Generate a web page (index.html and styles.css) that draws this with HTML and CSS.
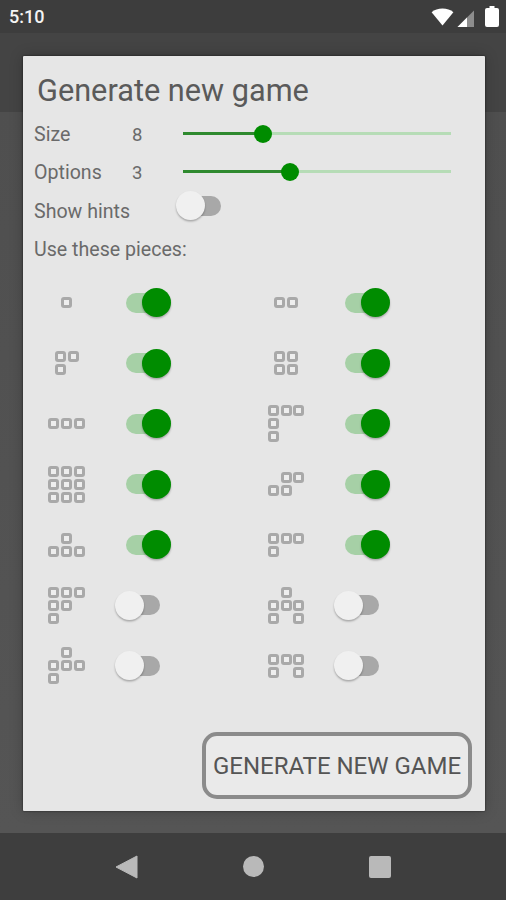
FILE: index.html
```html
<!DOCTYPE html>
<html lang="en">
<head>
<meta charset="utf-8">
<title>Generate new game</title>
<link rel="stylesheet" href="styles.css">
</head>
<body>
<div class="screen">
  <header class="status">
    <span class="time">5:10</span>
    <div class="status-icons">
      <svg class="ic-wifi" width="23" height="18" viewBox="0 0 24 19"><path d="M0.5 4.5C3.5 1.800 7.500 0.500 12 0.500s8.500 1.300 11.500 4L12 18.500z" fill="#fff"/></svg>
      <svg class="ic-signal" width="18" height="18" viewBox="0 0 18 18"><path d="M17 0.500V17H0.500z" fill="#8d8d8d"/><path d="M10 7.500V17H0.500z" fill="#fff"/></svg>
      <svg class="ic-battery" width="14" height="21" viewBox="0 0 14 21"><path d="M4.500 0h5v2H12a2 2 0 0 1 2 2v15a2 2 0 0 1-2 2H2a2 2 0 0 1-2-2V4a2 2 0 0 1 2-2h2.500z" fill="#fff"/></svg>
    </div>
  </header>
  <div class="appbar"></div>
  <main class="content"></main>
  <nav class="navbar">
    <svg width="23" height="24" viewBox="0 0 23 24"><path d="M22 1V23L1 12z" fill="#b9b9b9" stroke="#b9b9b9" stroke-linejoin="round"/></svg>
    <span class="nav-home"></span>
    <span class="nav-recent"></span>
  </nav>

  <section class="dialog">
    <h1 class="title">Generate new game</h1>
    <div class="row row-slider">
      <span class="label">Size</span><span class="value">8</span>
      <div class="slider"><div class="slider-on" style="width:29.8%"></div><span class="slider-thumb" style="left:29.8%"></span></div>
    </div>
    <div class="row row-slider">
      <span class="label">Options</span><span class="value">3</span>
      <div class="slider"><div class="slider-on" style="width:39.8%"></div><span class="slider-thumb" style="left:39.8%"></span></div>
    </div>
    <div class="row row-hints">
      <span class="label label-hints">Show hints</span>
      <span class="toggle"><span class="track"></span><span class="thumb"></span></span>
    </div>
    <p class="label pieces-label">Use these pieces:</p>

    <div class="pieces">
      <div class="cell"><div class="piece c1"><i></i></div><span class="toggle on"><span class="track"></span><span class="thumb"></span></span></div>
      <div class="cell"><div class="piece c2"><i></i><i></i></div><span class="toggle on"><span class="track"></span><span class="thumb"></span></span></div>

      <div class="cell"><div class="piece c2"><i></i><i></i><i></i><b></b></div><span class="toggle on"><span class="track"></span><span class="thumb"></span></span></div>
      <div class="cell"><div class="piece c2"><i></i><i></i><i></i><i></i></div><span class="toggle on"><span class="track"></span><span class="thumb"></span></span></div>

      <div class="cell"><div class="piece c3"><i></i><i></i><i></i></div><span class="toggle on"><span class="track"></span><span class="thumb"></span></span></div>
      <div class="cell"><div class="piece c3"><i></i><i></i><i></i><i></i><b></b><b></b><i></i><b></b><b></b></div><span class="toggle on"><span class="track"></span><span class="thumb"></span></span></div>

      <div class="cell"><div class="piece c3"><i></i><i></i><i></i><i></i><i></i><i></i><i></i><i></i><i></i></div><span class="toggle on"><span class="track"></span><span class="thumb"></span></span></div>
      <div class="cell"><div class="piece c3"><b></b><i></i><i></i><i></i><i></i><b></b></div><span class="toggle on"><span class="track"></span><span class="thumb"></span></span></div>

      <div class="cell"><div class="piece c3"><b></b><i></i><b></b><i></i><i></i><i></i></div><span class="toggle on"><span class="track"></span><span class="thumb"></span></span></div>
      <div class="cell"><div class="piece c3"><i></i><i></i><i></i><i></i><b></b><b></b></div><span class="toggle on"><span class="track"></span><span class="thumb"></span></span></div>

      <div class="cell"><div class="piece c3"><i></i><i></i><i></i><i></i><i></i><b></b><i></i><b></b><b></b></div><span class="toggle"><span class="track"></span><span class="thumb"></span></span></div>
      <div class="cell"><div class="piece c3"><b></b><i></i><b></b><i></i><i></i><i></i><i></i><b></b><i></i></div><span class="toggle"><span class="track"></span><span class="thumb"></span></span></div>

      <div class="cell"><div class="piece c3"><b></b><i></i><b></b><i></i><i></i><i></i><i></i><b></b><b></b></div><span class="toggle"><span class="track"></span><span class="thumb"></span></span></div>
      <div class="cell"><div class="piece c3"><i></i><i></i><i></i><i></i><b></b><i></i></div><span class="toggle"><span class="track"></span><span class="thumb"></span></span></div>
    </div>

    <div class="actions"><button class="generate" type="button">GENERATE NEW GAME</button></div>
  </section>
</div>
</body>
</html>
```

FILE: styles.css
```css
* { box-sizing: border-box; }
html, body { margin: 0; padding: 0; }
body { font-family: Roboto, "Liberation Sans", sans-serif; background: #545454; }

.screen {
  position: relative;
  width: 506px;
  height: 900px;
  display: flex;
  flex-direction: column;
  overflow: hidden;
}

.status {
  height: 33px;
  background: #3d3d3d;
  display: flex;
  align-items: center;
  justify-content: space-between;
  padding: 0 7px 0 9px;
}
.time { color: #f4f4f4; font-size: 18px; font-weight: 500; }
.status-icons { display: flex; align-items: center; gap: 3px; }
.ic-signal { margin-top: 4px; margin-right: 7px; }

.appbar { height: 79px; background: #444; }
.content { flex: 1; background: linear-gradient(#4f4f4f, #555); }

.navbar {
  height: 67px;
  background: #3e3e3e;
  display: flex;
  align-items: center;
  padding-left: 115px;
}
.nav-home {
  width: 21px; height: 21px;
  border-radius: 50%;
  background: #b9b9b9;
  margin-left: 105px;
}
.nav-recent {
  width: 22px; height: 22px;
  border-radius: 2px;
  background: #b9b9b9;
  margin-left: 105px;
}

.dialog {
  position: absolute;
  left: 23px;
  top: 56px;
  width: 462px;
  height: 755px;
  background: #e6e6e6;
  border-radius: 1px;
  box-shadow: 0 0 2px rgba(0,0,0,.7), 0 0 14px rgba(0,0,0,.22);
  padding: 16px 13px 12px 11px;
  display: flex;
  flex-direction: column;
  color: #666;
}
.title {
  margin: 0;
  padding-left: 3px;
  font-size: 30.7px;
  font-weight: 400;
  line-height: 37px;
  height: 42.5px;
  color: #5a5a5a;
}
.label { font-size: 19.6px; line-height: 24px; color: #6a6a6a; margin: 0; }

.row { display: flex; align-items: center; }
.row-slider { height: 38px; }
.row-slider .label { width: 98px; padding-top: 2px; height: 26px; }
.value { width: 51px; padding-top: 2px; font-size: 18.5px; color: #6a6a6a; }

.slider { position: relative; width: 268px; height: 3px; background: #b6dcb6; }
.slider-on { height: 100%; background: #2f8a2f; }
.slider-thumb {
  position: absolute;
  top: 50%;
  width: 18px; height: 18px;
  margin: -9px 0 0 -9px;
  border-radius: 50%;
  background: #008c00;
}

.row-hints { height: 36px; }
.row-hints .toggle { margin-bottom: 6px; }
.label-hints { width: 142px; margin-top: 7px; }
.pieces-label { margin-top: 11px; height: 35px; }

.pieces {
  display: grid;
  grid-template-columns: 219.5px 219.5px;
  grid-auto-rows: 60.5px;
}
.cell { display: flex; align-items: center; }
.piece {
  width: 65.4px;
  display: grid;
  justify-content: center;
  gap: 1.8px;
  grid-auto-rows: 11px;
}
.c1 { grid-template-columns: 11px; }
.c2 { grid-template-columns: repeat(2, 11px); }
.c3 { grid-template-columns: repeat(3, 11px); }
.piece i {
  display: block;
  border: 3px solid #a9a9a9;
  border-radius: 3px;
  background: #eeeeee;
}

.cell .toggle { margin-left: 15.6px; }
.toggle { position: relative; display: block; width: 56px; height: 29px; flex: none; }
.track {
  position: absolute;
  left: 11px;
  top: 4.5px;
  width: 34px;
  height: 20px;
  border-radius: 10px;
  background: #a8a8a8;
}
.thumb {
  position: absolute;
  left: 0;
  top: 0;
  width: 29px;
  height: 29px;
  border-radius: 50%;
  background: #f0f0f0;
  box-shadow: 0 1.5px 2px rgba(0,0,0,.28);
}
.toggle.on .track { background: #a6d0a6; }
.toggle.on .thumb { left: 27px; background: #008c00; }

.actions { margin-top: auto; display: flex; justify-content: flex-end; }
.generate {
  width: 270px;
  height: 67px;
  border: 4px solid #8b8b8b;
  border-radius: 15px;
  background: #eaeaea;
  font-family: inherit;
  font-size: 24px;
  color: #555;
  padding: 0;
  white-space: nowrap;
}
```
